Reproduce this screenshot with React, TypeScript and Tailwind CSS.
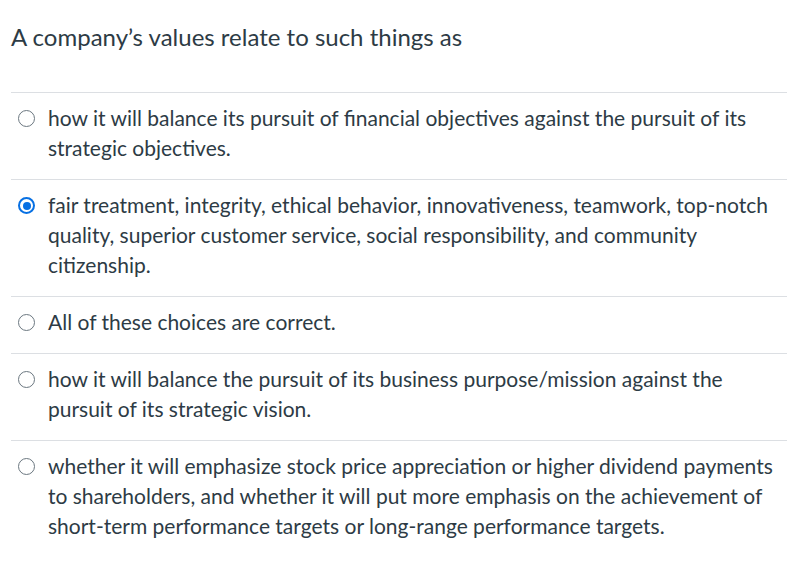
import React from "react";

const options = [
  "how it will balance its pursuit of financial objectives against the pursuit of its strategic objectives.",
  "fair treatment, integrity, ethical behavior, innovativeness, teamwork, top-notch quality, superior customer service, social responsibility, and community citizenship.",
  "All of these choices are correct.",
  "how it will balance the pursuit of its business purpose/mission against the pursuit of its strategic vision.",
  "whether it will emphasize stock price appreciation or higher dividend payments to shareholders, and whether it will put more emphasis on the achievement of short-term performance targets or long-range performance targets.",
];

function Radio({ checked }: { checked: boolean }) {
  return checked ? (
    <span className="mt-[7px] flex h-[17px] w-[17px] shrink-0 items-center justify-center rounded-full border-[2.5px] border-[#0770e3] bg-white">
      <span className="h-[8px] w-[8px] rounded-full bg-[#0770e3]" />
    </span>
  ) : (
    <span className="mt-[7px] h-[17px] w-[17px] shrink-0 rounded-full border-[1.5px] border-[#6b7780] bg-white" />
  );
}

export default function App() {
  return (
    <div className="h-[570px] w-[803px] bg-white font-['Lato',sans-serif] text-[#2d3b45]">
      <div className="pl-[11px] pr-[16px] pt-[22px]">
        <h1 className="text-[24px] leading-[30px] font-normal">A company’s values relate to such things as</h1>
        <div className="mt-[40px]">
          {options.map((text, i) => (
            <div key={i} className="flex gap-[13px] border-t border-[#dcdfe3] pl-[7px] pt-[10px] pb-[16px]">
              <Radio checked={i === 1} />
              <p className="text-[21px] leading-[30px]">{text}</p>
            </div>
          ))}
        </div>
      </div>
    </div>
  );
}
